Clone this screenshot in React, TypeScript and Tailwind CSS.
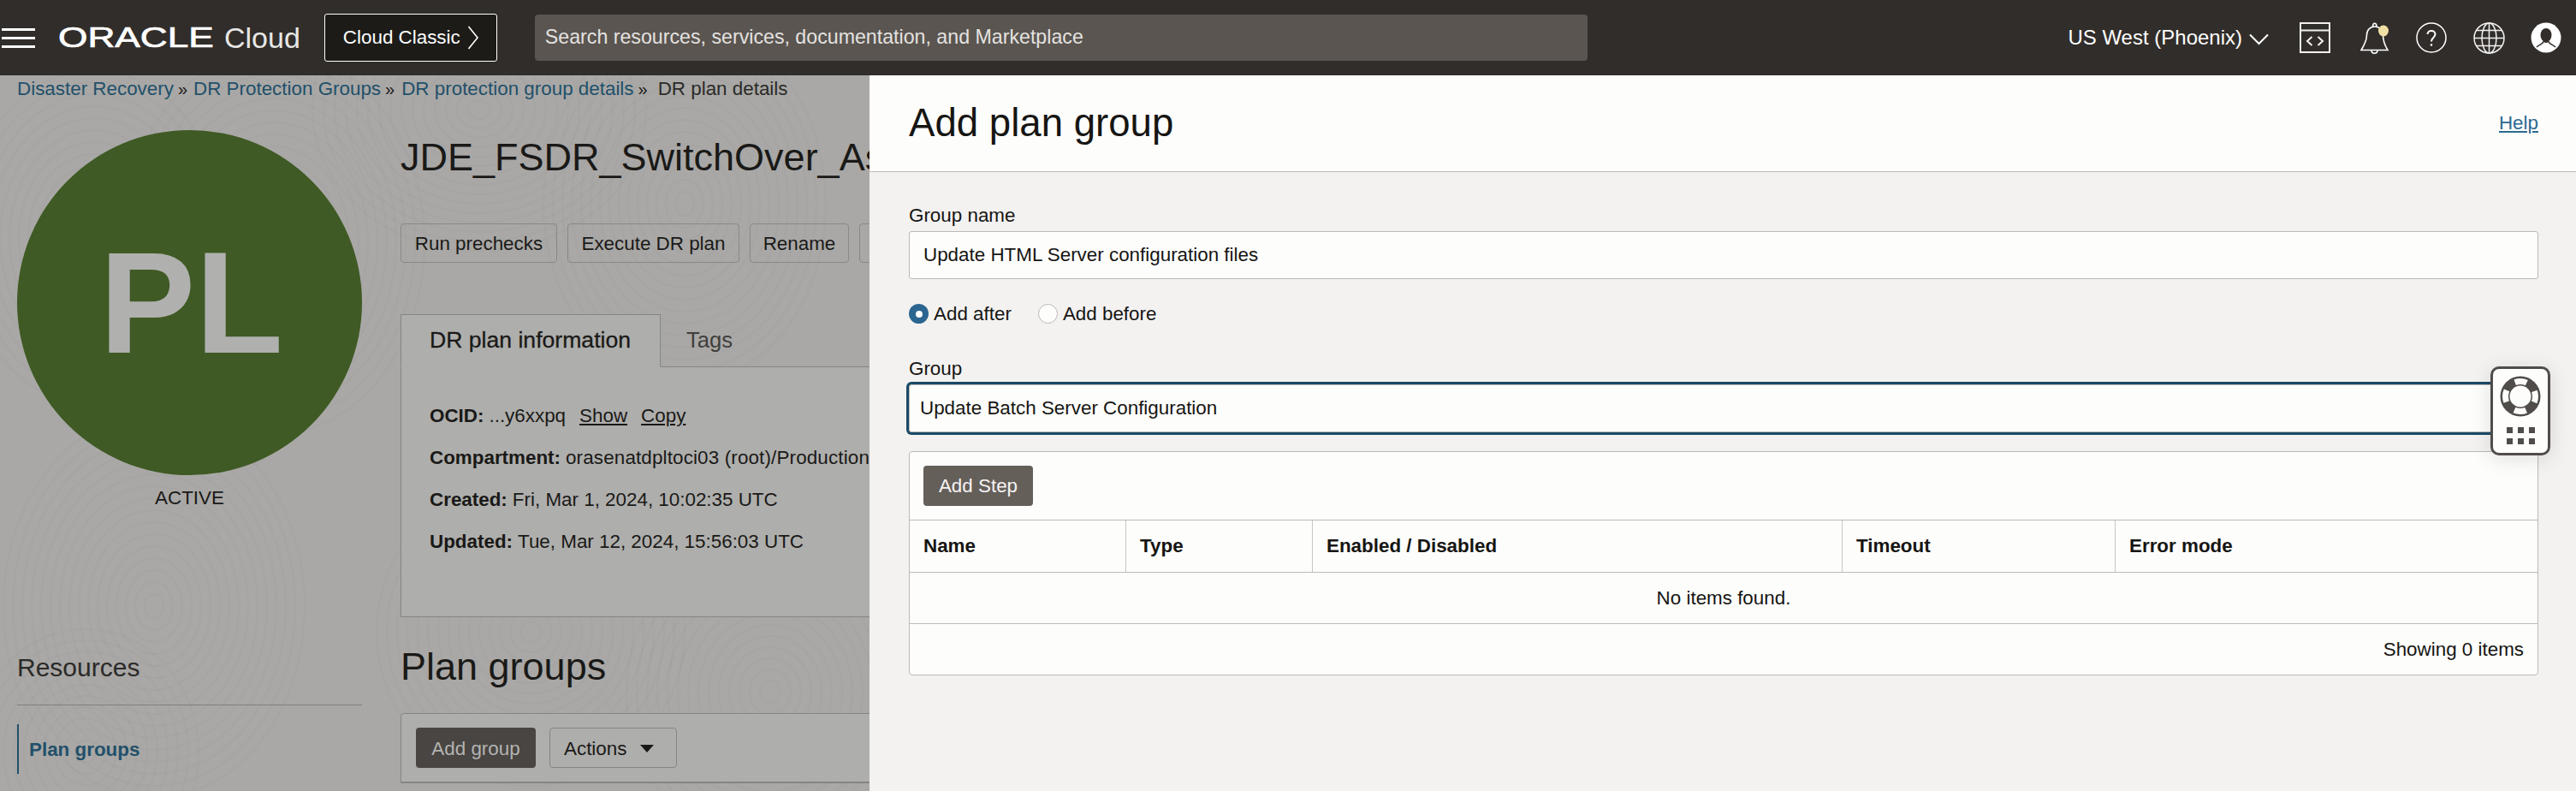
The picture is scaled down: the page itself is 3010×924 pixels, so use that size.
import React from "react";

const rings: { cx: number; cy: number; rx: number; ry: number; n: number }[] = [
  { cx: 110, cy: 190, rx: 11, ry: 14, n: 14 },
  { cx: 320, cy: 195, rx: 11, ry: 14, n: 16 },
  { cx: 560, cy: 40, rx: 13, ry: 11, n: 15 },
  { cx: 800, cy: 150, rx: 11, ry: 14, n: 15 },
  { cx: 620, cy: 650, rx: 12, ry: 12, n: 15 },
  { cx: 180, cy: 620, rx: 11, ry: 14, n: 16 },
  { cx: 100, cy: 790, rx: 12, ry: 13, n: 11 },
  { cx: 900, cy: 720, rx: 12, ry: 13, n: 14 },
];

function Texture() {
  return (
    <svg className="absolute inset-0 h-full w-full" viewBox="0 0 1016 836" fill="none">
      {rings.map((r, i) => (
        <g key={i} stroke="#9c9b99" strokeWidth="2" opacity="0.2">
          {Array.from({ length: r.n }).map((_, k) => (
            <ellipse key={k} cx={r.cx} cy={r.cy} rx={r.rx * (k + 1)} ry={r.ry * (k + 1)} />
          ))}
        </g>
      ))}
    </svg>
  );
}

function DimButton({ children, className }: { children: React.ReactNode; className: string }) {
  return (
    <div className={`flex h-[46px] shrink-0 items-center justify-center rounded-[4px] border border-[#8a8886] pt-[2px] text-[22.4px] text-[#1a1917] ${className}`}>
      {children}
    </div>
  );
}

function Col({ children, last }: { children: string; last?: boolean }) {
  return (
    <div className={`flex items-center pl-4 text-[22.4px] font-bold text-[#161513] ${last ? "" : "border-r border-[#c9c6c3]"}`}>
      {children}
    </div>
  );
}

function Sep() {
  return <span className="mr-[8px] ml-[5px] text-[20px]">»</span>;
}

export default function App() {
  return (
    <div className="flex h-[924px] w-[3010px] flex-col overflow-hidden font-['Liberation_Sans',Arial,sans-serif]">
      <header className="flex h-[88px] shrink-0 items-center bg-[#312d2a] text-white">
        <div className="ml-[2px] flex h-[23px] w-[39px] flex-col justify-between">
          <span className="h-[3px] bg-white" />
          <span className="h-[3px] bg-white" />
          <span className="h-[3px] bg-white" />
        </div>
        <div className="ml-[27px] h-[34px] w-[182px]">
          <span className="block origin-left scale-x-[1.34] text-[33px] leading-[34px] whitespace-nowrap [-webkit-text-stroke:0.7px_white]">ORACLE</span>
        </div>
        <span className="ml-[12px] text-[34px] leading-none text-[#e8e7e6]">Cloud</span>
        <div className="ml-[28px] flex h-[56px] w-[202px] items-center rounded-[3px] border border-white bg-[#1c1b18] pl-[21px] text-[22.4px] leading-none">
          Cloud Classic
          <svg width="14" height="30" viewBox="0 0 14 30" fill="none" className="ml-[8px]">
            <path d="M1.500 2 L12 15 L1.500 28" stroke="white" strokeWidth="1.6" />
          </svg>
        </div>
        <div className="ml-[44px] flex h-[54px] w-[1230px] items-center rounded-[4px] bg-[#5a5550] pb-[2px] pl-[12px] text-[23.2px] text-[#e4e2e0]">
          Search resources, services, documentation, and Marketplace
        </div>
        <div className="ml-auto flex items-center pr-[17px]">
          <span className="text-[24px]">US West (Phoenix)</span>
          <svg width="23" height="14" viewBox="0 0 23 14" fill="none" className="mt-[3px] ml-[8px]">
            <path d="M1 1.500 L11.500 12 L22 1.500" stroke="white" strokeWidth="2" />
          </svg>
          <svg width="36" height="36" viewBox="0 0 36 36" fill="none" className="ml-[36px]" stroke="#f2f1f0" strokeWidth="2">
            <rect x="1" y="1" width="34" height="34" />
            <path d="M1 9.500 H35" />
            <path d="M14.500 17 L9 22 L14.500 27 M21.500 17 L27 22 L21.500 27" />
          </svg>
          <svg width="34" height="38" viewBox="0 0 34 38" fill="none" className="ml-[35px]" stroke="white" strokeWidth="1.6">
            <path d="M1 33.500 H32 C28 27 26.500 22 26.500 16 C26.500 10 22 6 17 6 C11.500 6 7.500 10 7.500 16 C7.500 22 5 27 1 33.500 Z" />
            <path d="M14.500 6 C14.500 1 19 1 19 6 M13 33.500 C13 38.500 20 38.500 20 33.500" />
            <ellipse cx="27" cy="11" rx="6" ry="6.500" fill="#f0dfa5" stroke="none" />
          </svg>
          <svg width="36" height="36" viewBox="0 0 36 36" fill="none" className="ml-[31px]" stroke="white" strokeWidth="1.500">
            <circle cx="18" cy="18" r="17" />
            <path d="M13.500 14 C13.500 8.500 22.500 8.500 22.500 14 C22.500 18 18 18 18 22.500" strokeWidth="2" />
            <circle cx="18" cy="26.500" r="1.300" fill="white" stroke="none" />
          </svg>
          <svg width="37" height="37" viewBox="0 0 37 37" fill="none" className="ml-[31px]" stroke="#f2f1f0" strokeWidth="1.500">
            <circle cx="18.500" cy="18.500" r="17.500" />
            <ellipse cx="18.500" cy="18.500" rx="8.500" ry="17.500" />
            <path d="M18.500 1 V36 M1 18.500 H36 M4 9.500 H33 M4 27.500 H33" />
          </svg>
          <svg width="36" height="36" viewBox="0 0 36 36" className="ml-[30px]">
            <circle cx="18" cy="18" r="17.500" fill="white" />
            <ellipse cx="18" cy="15" rx="6.500" ry="8" fill="#312d2a" />
            <path d="M7 29 C10 26 14 26 15.500 22 C17 23.500 19 23.500 20.500 22 C22 26 26 26 29 29" fill="none" stroke="#312d2a" strokeWidth="1.600" />
          </svg>
        </div>
      </header>

      <div className="flex min-h-0 flex-1">
        <div className="relative w-[1016px] shrink-0 overflow-hidden bg-[#a9a8a6] text-[#1a1917]">
          <Texture />
          <div className="relative flex h-[32px] items-center pl-5 text-[22.4px] whitespace-nowrap">
            <span className="text-[#22506a]">Disaster Recovery</span>
            <Sep />
            <span className="-ml-[1px] text-[#22506a]">DR Protection Groups</span>
            <Sep />
            <span className="text-[#22506a]">DR protection group details</span>
            <Sep />
            <span className="ml-[4px] text-[#2b2a28]">DR plan details</span>
          </div>
          <div className="relative flex pt-8">
            <aside className="ml-5 w-[403px] shrink-0">
              <div className="flex h-[403px] w-[403px] items-center justify-center rounded-full bg-[#3f5a24] pl-1 text-[168px] font-bold text-[#b0b0ae]">
                PL
              </div>
              <div className="mt-3 pt-[1px] text-center text-[22.4px] leading-7">ACTIVE</div>
              <div className="mt-[164px] border-b border-[#807f7d] pb-[23px] text-[30px] leading-10 text-[#2b2a28]">Resources</div>
              <div className="mt-[22px] flex h-[58px] items-center border-l-2 border-[#22506a] pt-[2px] pl-3 text-[22.4px] font-bold text-[#22506a]">
                Plan groups
              </div>
            </aside>
            <main className="ml-[45px] w-[900px] shrink-0">
              <h1 className="flex h-16 items-center text-[45px] whitespace-nowrap">JDE_FSDR_SwitchOver_Ashburn_Phoenix</h1>
              <div className="mt-[45px] flex gap-3">
                <DimButton className="w-[183px]">Run prechecks</DimButton>
                <DimButton className="w-[201px]">Execute DR plan</DimButton>
                <DimButton className="w-[116px]">Rename</DimButton>
                <DimButton className="w-[100px]">Move</DimButton>
              </div>
              <div className="mt-[60px] flex h-[62px] border-b border-[#868583]">
                <div className="-mb-px flex w-[304px] items-center border border-[#868583] border-b-[#aeaeac] bg-[#aeaeac] pl-[33px] text-[26.6px] [-webkit-text-stroke:0.3px_#1a1917]">
                  DR plan information
                </div>
                <div className="flex items-center pl-[30px] text-[25.6px] text-[#3f3e3c]">Tags</div>
              </div>
              <div className="h-[292px] border-x border-b border-[#868583] bg-[#aeaeac] pt-[32px] pl-[33px] text-[22.4px] whitespace-nowrap">
                <div className="flex h-[49px] items-center">
                  <b>OCID:</b>
                  <span className="ml-[6px]">...y6xxpq</span>
                  <span className="ml-4 underline">Show</span>
                  <span className="ml-4 underline">Copy</span>
                </div>
                <div className="flex h-[49px] items-center">
                  <b>Compartment:</b>
                  <span className="ml-[6px] tracking-[0.15px]">orasenatdpltoci03 (root)/Production</span>
                </div>
                <div className="flex h-[49px] items-center">
                  <b>Created:</b>
                  <span className="ml-[6px]">Fri, Mar 1, 2024, 10:02:35 UTC</span>
                </div>
                <div className="flex h-[49px] items-center">
                  <b>Updated:</b>
                  <span className="ml-[6px]">Tue, Mar 12, 2024, 15:56:03 UTC</span>
                </div>
              </div>
              <h2 className="mt-[28px] flex h-[60px] items-center text-[45px]">Plan groups</h2>
              <div className="mt-[24px] rounded-t-[4px] border border-[#868583] bg-[#aeaeac]">
                <div className="flex gap-4 border-b border-[#868583] px-[17px] pt-4 pb-4">
                  <div className="flex h-[47px] w-[140px] items-center justify-center rounded-[4px] bg-[#484542] pt-[2px] text-[22.4px] text-[#b4b3b1]">Add group</div>
                  <div className="flex h-[47px] w-[149px] items-center gap-4 rounded-[4px] border border-[#868583] pt-[2px] pl-[16px] text-[22.4px]">
                    Actions
                    <span className="h-0 w-0 border-x-[8px] border-t-[9px] border-x-transparent border-t-[#1a1917]" />
                  </div>
                </div>
              </div>
            </main>
          </div>
        </div>

        <section className="relative min-w-0 flex-1 bg-[#f3f2f1] text-[#161513]">
          <div className="flex h-[113px] items-center justify-between border-b border-[#bcb9b6] bg-[#fdfdfb] pr-[44px] pl-[46px]">
            <h2 className="text-[45.6px]">Add plan group</h2>
            <a className="text-[22.4px] text-[#2b6a92] underline">Help</a>
          </div>
          <div className="pt-[37px] pr-[44px] pl-[46px] text-[22.4px]">
            <div className="mb-1 flex h-7 items-center">Group name</div>
            <div className="flex h-[56px] items-center rounded-[3px] border border-[#bcb9b6] bg-[#fdfdfb] pl-4">
              Update HTML Server configuration files
            </div>
            <div className="mt-[29px] flex h-[23px] items-center">
              <span className="flex h-[23px] w-[23px] items-center justify-center rounded-full bg-[#2c6690]">
                <span className="h-[8px] w-[8px] rounded-full bg-white" />
              </span>
              <span className="ml-[6px]">Add after</span>
              <span className="ml-[31px] h-[23px] w-[23px] rounded-full border border-[#bcb9b6] bg-[#fdfdfb]" />
              <span className="ml-[6px]">Add before</span>
            </div>
            <div className="mt-[39px] mb-1 flex h-7 items-center">Group</div>
            <div className="flex h-[56px] items-center rounded-[3px] border border-[#bcb9b6] bg-[#fdfdfb] pl-3 shadow-[0_0_0_3px_#1b4a66]">
              Update Batch Server Configuration
            </div>
            <div className="mt-[22px] rounded-[4px] border border-[#bcb9b6] bg-[#fdfdfb]">
              <div className="h-[80px] border-b border-[#bcb9b6] pt-4 pl-4">
                <div className="flex h-[47px] w-[128px] items-center justify-center rounded-[4px] bg-[#655f5a] text-[#f5f4f2]">Add Step</div>
              </div>
              <div className="grid h-[61px] grid-cols-[253px_218px_619px_319px_1fr] border-b border-[#bcb9b6]">
                <Col>Name</Col>
                <Col>Type</Col>
                <Col>Enabled / Disabled</Col>
                <Col>Timeout</Col>
                <Col last>Error mode</Col>
              </div>
              <div className="flex h-[60px] items-center justify-center border-b border-[#bcb9b6]">No items found.</div>
              <div className="flex h-[59px] items-center justify-end pr-4">Showing 0 items</div>
            </div>
          </div>
          <div className="absolute top-[340px] right-[30px] flex h-[104px] w-[70px] flex-col items-center rounded-[10px] border-[3px] border-[#4f4c49] bg-[#fdfdfb] shadow-[0_4px_24px_rgba(0,0,0,0.12)]">
            <svg width="48" height="48" viewBox="0 0 48 48" className="mt-[8px]">
              <circle cx="24" cy="24" r="23.500" fill="#4f4c49" />
              <circle cx="24" cy="24" r="17.500" fill="none" stroke="#fdfdfb" strokeWidth="7" strokeDasharray="14 13.500" strokeDashoffset="7" />
              <circle cx="24" cy="24" r="12.500" fill="#fdfdfb" />
            </svg>
            <div className="mt-[12px] grid grid-cols-[repeat(3,7px)] gap-x-[6px] gap-y-[6px]">
              {[0, 1, 2, 3, 4, 5].map((i) => (
                <span key={i} className="h-[7px] w-[7px] bg-[#4f4c49]" />
              ))}
            </div>
          </div>
        </section>
      </div>
    </div>
  );
}
